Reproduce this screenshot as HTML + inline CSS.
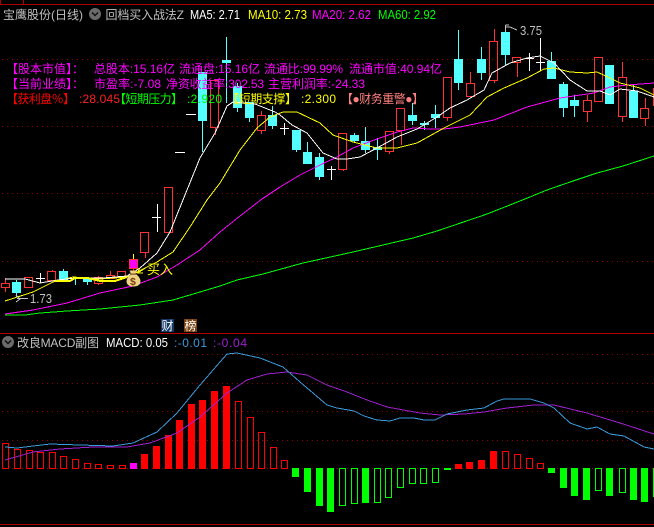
<!DOCTYPE html>
<html><head><meta charset="utf-8"><style>
html,body{margin:0;padding:0;background:#000;width:654px;height:527px;overflow:hidden}
svg{display:block;position:absolute;left:0;top:0}
text{font-family:"Liberation Sans","WenQuanYi Zen Hei","Noto Sans CJK SC",sans-serif;font-size:12px}
.m{font-size:12.6px}
</style></head><body>
<svg width="654" height="527" viewBox="0 0 654 527">
<rect width="654" height="527" fill="#000"/>
<g shape-rendering="crispEdges">
<path d="M0 4.5H654M23.5 0V4M0.5 0V4M0 333.5H654M0 524.5H654" stroke="#b00000" fill="none"/>
<path d="M2 59.5H654M2 126.5H654M2 193.5H654M2 261.5H654M2 354.5H654M2 383.5H654M2 411.5H654M2 440.5H654M2 468.5H654" stroke="#900000" stroke-dasharray="1 4" fill="none"/>
<!-- red candles -->
<path fill="#ff3232" d="
M1 283h9v5h-9zM2 284v3h7v-3zM5 278h1v5h-1zM5 288h1v4h-1z
M24 277h9v11h-9zM25 278v9h7v-9z
M47 271h9v10h-9zM48 272v8h7v-8zM52 270h1v1h-1z
M94 277h9v7h-9zM95 278v5h7v-5zM98 276h1v1h-1zM98 284h1v1h-1z
M106 275h9v4h-9zM107 276v2h7v-2zM110 271h1v4h-1z
M117 271h9v7h-9zM118 272v5h7v-5z
M140 232h9v21h-9zM141 233v19h7v-19zM145 253h1v5h-1z
M164 187h9v46h-9zM165 188v44h7v-44z
M210 80h9v48h-9zM211 81v46h7v-46zM215 128h1v7h-1z
M257 115h9v16h-9zM258 116v14h7v-14zM261 111h1v4h-1zM261 131h1v3h-1z
M338 133h9v37h-9zM339 134v35h7v-35zM343 170h1v1h-1z
M385 131h9v21h-9zM386 132v19h7v-19zM389 152h1v2h-1z
M396 108h9v23h-9zM397 109v21h7v-21zM401 131h1v14h-1z
M443 77h9v41h-9zM444 78v39h7v-39zM447 118h1v3h-1z
M466 83h9v14h-9zM467 84v12h7v-12zM470 72h1v11h-1z
M489 41h9v40h-9zM490 42v38h7v-38zM494 29h1v12h-1zM494 81h1v2h-1z
M512 57h9v6h-9zM513 58v4h7v-4zM517 63h1v14h-1z
M583 100h9v12h-9zM584 101v10h7v-10zM587 95h1v5h-1zM587 112h1v10h-1z
M594 57h9v45h-9zM595 58v43h7v-43z
M618 77h9v40h-9zM619 78v38h7v-38zM622 62h1v15h-1zM622 117h1v5h-1z
M640 108h9v11h-9zM641 109v9h7v-9zM645 98h1v10h-1zM645 119h1v7h-1z
M653 88h1v18h-1z"/>
<!-- cyan candles -->
<path fill="#54ffff" d="
M12 282h9v11h-9zM16 280h1v17h-1z
M59 271h9v9h-9zM63 269h1v2h-1z
M72 278h9v1h-9zM75 279h1v6h-1z
M83 279h9v3h-9zM87 282h1v3h-1z
M198 72h9v49h-9zM202 121h1v31h-1z
M222 60h9v3h-9zM226 37h1v66h-1z
M233 86h9v22h-9zM237 83h1v29h-1z
M245 102h9v16h-9zM249 118h1v4h-1z
M268 115h9v11h-9zM272 106h1v23h-1z
M292 130h9v20h-9zM296 150h1v2h-1z
M303 152h9v12h-9zM307 142h1v10h-1z
M315 157h9v20h-9zM319 153h1v27h-1z
M350 135h9v6h-9zM354 133h1v10h-1z
M361 141h9v9h-9zM365 127h1v26h-1z
M373 147h9v3h-9zM377 138h1v22h-1z
M408 115h9v6h-9zM412 103h1v22h-1z
M420 123h9v2h-9zM424 121h1v9h-1z
M431 114h9v4h-9zM435 105h1v23h-1z
M454 59h9v24h-9zM458 30h1v60h-1z
M477 59h9v14h-9zM481 47h1v33h-1z
M501 32h9v23h-9zM505 28h1v37h-1z
M547 61h9v18h-9zM551 52h1v9h-1z
M559 84h9v24h-9zM563 82h1v35h-1z
M570 100h9v6h-9zM574 95h1v22h-1z
M605 65h9v39h-9z
M629 91h9v27h-9zM633 84h1v7h-1z"/>
<!-- doji -->
<path fill="none" stroke="#fff" d="M40.5 273V283M36 278.5H45M157.5 204V232M152 217.5H161M175 152.5H185M186 114.5H196M284.5 123V135M280 128.5H289M331.5 166V180M327 169.5H336M529.5 53V71M525 58.5H534M540.5 38V71M536 62.5H545"/>
<!-- magenta candle -->
<path d="M133 254h1v5h-1z" fill="#ffff00"/>
<path fill="#ff3232" d="M129 259h9v10h-9zM133 269h1v3h-1z"/>
<rect x="130" y="260" width="7" height="8" fill="#ff00ff"/>
<!-- MAs -->
<g fill="none" stroke-width="1">
<polyline stroke="#00ff00" points="5,315 25,315 40,313 67,311 100,309 140,305 173,300 200,292 220,286 237,280 263,274 303,263 353,252 413,238 437,231 487,214 520,201 547,190 573,181 597,173 623,166 654,156"/>
<polyline stroke="#ff00ff" points="5,314 33,310 67,303 100,293 133,286 157,277 177,265 200,250 220,232 240,216 262,199 280,187 300,175 320,165 337,157 353,148 377,139 397,132 413,128 430,129 444,129 460,127 494,120 527,107 560,98 594,93 610,87 627,85 654,83"/>
<polyline stroke="#ffff00" points="5,301 33,292 53,282 73,277 100,279 127,277 157,262 173,252 190,227 207,200 220,183 240,150 257,128 270,117 283,112 297,112 320,123 333,135 353,142 377,148 397,148 417,143 444,128 470,115 487,97 504,88 527,78 544,69 554,68 570,72 587,73 597,72 610,78 620,83 640,88 654,95"/>
<polyline stroke="#ffffff" points="5,279 25,279 40,283 58,280 75,278 103,278 127,276 140,268 157,253 170,232 187,190 200,158 215,133 227,106 233,102 255,104 275,112 280,115 292,125 307,133 323,153 337,159 347,159 360,157 377,148 397,137 417,129 437,117 450,108 467,100 484,90 492,73 510,63 527,58 540,56 554,63 570,80 587,91 600,91 610,95 620,89 637,91 654,97"/>
</g>
<path stroke="#ffff00" stroke-width="2" fill="none" d="M55 281H70L75 278H88L100 281H115L127 277"/>
<!-- MACD hollow -->
<path fill="#ff0000" d="
M2 443h7v26h-7zM3 444v24h5v-24z
M14 449h7v20h-7zM15 450v18h5v-18z
M26 450h7v19h-7zM27 451v17h5v-17z
M37 452h7v17h-7zM38 453v15h5v-15z
M49 452h7v17h-7zM50 453v15h5v-15z
M60 456h7v13h-7zM61 457v11h5v-11z
M72 459h7v10h-7zM73 460v8h5v-8z
M84 463h7v6h-7zM85 464v4h5v-4z
M95 464h7v5h-7zM96 465v3h5v-3z
M107 465h7v4h-7zM108 466v2h5v-2z
M119 465h7v4h-7zM120 466v2h5v-2z
M235 401h7v68h-7zM236 402v66h5v-66z
M247 417h7v52h-7zM248 418v50h5v-50z
M258 432h7v37h-7zM259 433v35h5v-35z
M270 447h7v22h-7zM271 448v20h5v-20z
M281 460h7v9h-7zM282 461v7h5v-7z
M502 451h7v18h-7zM503 452v16h5v-16z
M514 454h7v15h-7zM515 455v13h5v-13z
M526 458h7v11h-7zM527 459v9h5v-9z
M537 463h7v6h-7zM538 464v4h5v-4z"/>
<path fill="#ff0000" d="M141 454h7v15h-7zM153 446h7v23h-7zM165 435h7v34h-7zM176 420h7v49h-7zM188 404h7v65h-7zM199 400h7v69h-7zM211 391h7v78h-7zM223 386h7v83h-7zM455 464h7v5h-7zM466 462h7v7h-7zM478 460h7v9h-7zM490 451h7v18h-7z"/>
<rect x="130" y="463" width="7" height="6" fill="#ff00ff"/>
<path fill="#00ff00" d="M292 468h7v9h-7zM304 468h7v24h-7zM316 468h7v38h-7zM327 468h7v44h-7zM362 468h7v35h-7zM444 468h7v2h-7zM548 468h7v5h-7zM560 468h7v20h-7zM571 468h7v28h-7zM583 468h7v32h-7zM606 468h7v28h-7zM630 468h7v32h-7zM641 468h7v34h-7zM653 468h7v29h-7z"/>
<path fill="#00ff00" d="
M339 468h7v38h-7zM340 469v36h5v-36z
M351 468h7v36h-7zM352 469v34h5v-34z
M374 468h7v35h-7zM375 469v33h5v-33z
M385 468h7v30h-7zM386 469v28h5v-28z
M397 468h7v20h-7zM398 469v18h5v-18z
M409 468h7v16h-7zM410 469v14h5v-14z
M420 468h7v16h-7zM421 469v14h5v-14z
M432 468h7v15h-7zM433 469v13h5v-13z
M595 468h7v23h-7zM596 469v21h5v-21z
M619 468h7v25h-7zM620 469v23h5v-23z"/>
<polyline fill="none" stroke="#a020d0" points="5,460 33,452 60,449 93,447 127,447 150,443 177,433 200,417 227,393 247,380 267,374 287,372 307,375 327,385 347,392 367,400 387,407 420,413 440,415 464,414 484,412 507,408 534,405 554,405 587,413 620,423 654,434"/>
<polyline fill="none" stroke="#3a9ad9" points="5,447 17,448 33,446 50,444 80,445 113,446 133,443 157,432 177,413 200,385 227,354 237,353 260,358 283,367 300,382 327,405 337,408 354,411 364,416 377,420 390,421 400,418 414,418 424,420 435,420 447,414 467,410 484,408 497,401 504,399 530,399 544,403 554,408 570,423 587,429 597,427 610,434 624,436 644,447 654,449"/>
<!-- marks -->
<path fill="none" stroke="#c0c0c0" d="M505.5 25V31M505.5 25H509M506 27H510L517 30M16 295L20 299L16 302M17 298.5H28"/>
<path fill="none" stroke="#ffff00" d="M137.5 273L147 267M137 273H143M137 273L140 268"/>
<rect x="161" y="319" width="13" height="13" fill="#123a66"/>
<rect x="184" y="319" width="13" height="13" fill="#7a4210"/>
</g>
<!-- money bag -->
<path d="M129.5 270.5H137L135.5 274C139 276 140.5 279 140.5 281.5C140.5 285 137 286.5 133.5 286.5C130 286.5 126.5 285 126.5 281.5C126.5 279 128 276 131 274Z" fill="#ecd384"/>
<rect x="130" y="273.5" width="7" height="1.2" fill="#7a4a14"/>
<text x="130" y="285" fill="#7a3a10" style="font-size:10.5px;font-weight:bold">$</text>
<text x="147" y="274" fill="#ffff00" textLength="26" lengthAdjust="spacing" style="font-size:13px">买入</text>
<text x="161.5" y="330" fill="#fff">财</text>
<text x="184.5" y="330" fill="#fff">榜</text>
<text x="520" y="35" fill="#c0c0c0" textLength="22" lengthAdjust="spacingAndGlyphs" style="font-size:13px">3.75</text>
<text x="30" y="303" fill="#c0c0c0" textLength="22" lengthAdjust="spacingAndGlyphs" style="font-size:13px">1.73</text>
<!-- header -->
<text x="3" y="19" fill="#c0c0c0" textLength="80" lengthAdjust="spacing">宝鹰股份(日线)</text>
<circle cx="95" cy="14" r="6" fill="#6a6a6a"/>
<path d="M92 12.5L95 15.5L98 12.5" fill="none" stroke="#111" stroke-width="1.5"/>
<text x="105.5" y="19" fill="#c0c0c0" textLength="78.5" lengthAdjust="spacing">回档买入战法Z</text>
<text class="m" x="190" y="19" fill="#ffffff" textLength="50" lengthAdjust="spacingAndGlyphs">MA5: 2.71</text>
<text class="m" x="248" y="19" fill="#ffff00" textLength="59" lengthAdjust="spacingAndGlyphs">MA10: 2.73</text>
<text class="m" x="312" y="19" fill="#ff00ff" textLength="59" lengthAdjust="spacingAndGlyphs">MA20: 2.62</text>
<text class="m" x="378" y="19" fill="#00ff00" textLength="58" lengthAdjust="spacingAndGlyphs">MA60: 2.92</text>
<!-- info lines -->
<g fill="#ff00ff">
<text x="6" y="73">【股本市值】：</text>
<text x="94" y="73" textLength="81" lengthAdjust="spacing">总股本:15.16亿</text>
<text x="179" y="73" textLength="81" lengthAdjust="spacing">流通盘:15.16亿</text>
<text x="264" y="73" textLength="79" lengthAdjust="spacing">流通比:99.99%</text>
<text x="349" y="73" textLength="93" lengthAdjust="spacing">流通市值:40.94亿</text>
<text x="6" y="88">【当前业绩】：</text>
<text x="94" y="88" textLength="67" lengthAdjust="spacing">市盈率:-7.08</text>
<text x="166" y="88" textLength="98" lengthAdjust="spacing">净资收益率:302.53</text>
<text x="268" y="88" textLength="97" lengthAdjust="spacing">主营利润率:-24.33</text>
</g>
<text x="6" y="103" fill="#ff0000" textLength="69" lengthAdjust="spacing">【获利盘％】</text>
<text x="79" y="103" fill="#ff2020" textLength="41" lengthAdjust="spacing">:28.045</text>
<text x="114" y="103" fill="#00ff00" textLength="69" lengthAdjust="spacing">【短期压力】</text>
<text x="187" y="103" fill="#00ff00" textLength="35" lengthAdjust="spacing">:2.920</text>
<text x="227" y="103" fill="#ffff00" textLength="70" lengthAdjust="spacing">【短期支撑】</text>
<text x="301" y="103" fill="#ffff00" textLength="35" lengthAdjust="spacing">:2.300</text>
<text x="341" y="103" fill="#ff8080" textLength="83" lengthAdjust="spacing">【●财务重警●】</text>
<!-- MACD header -->
<circle cx="8" cy="342" r="6" fill="#6a6a6a"/>
<path d="M5 340.5L8 343.5L11 340.5" fill="none" stroke="#111" stroke-width="1.5"/>
<text x="17" y="347" fill="#c0c0c0" textLength="82" lengthAdjust="spacing">改良MACD副图</text>
<text class="m" x="106" y="347" fill="#ffffff" textLength="62" lengthAdjust="spacingAndGlyphs">MACD: 0.05</text>
<text x="174" y="347" fill="#3a9ad9" textLength="33" lengthAdjust="spacing">:-0.01</text>
<text x="213" y="347" fill="#a020d0" textLength="34" lengthAdjust="spacing">:-0.04</text>
</svg>
</body></html>
